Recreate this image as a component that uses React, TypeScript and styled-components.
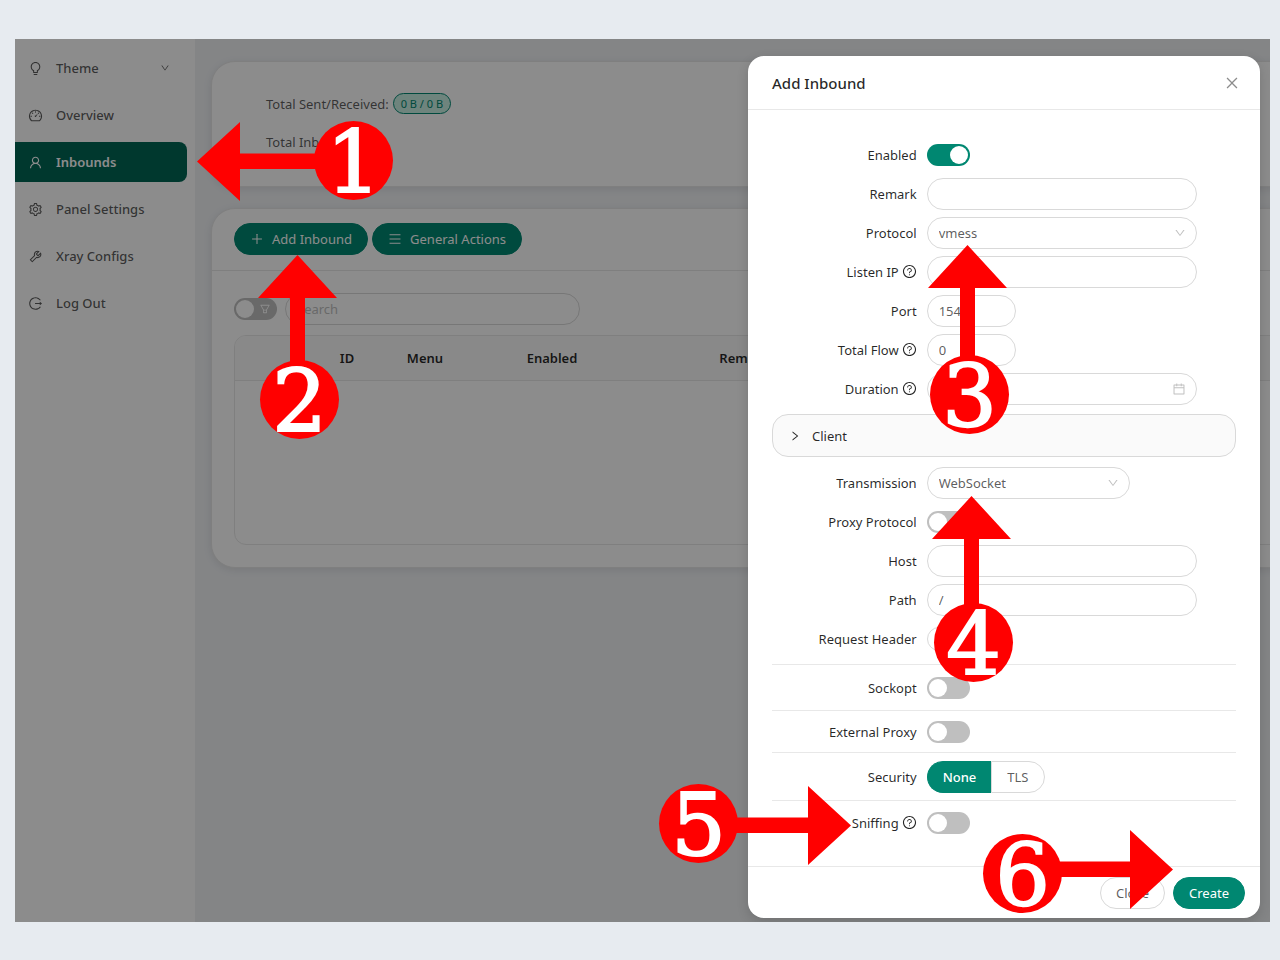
import React from "react";
import styled, { createGlobalStyle, css } from "styled-components";
import {
  AiOutlineBulb,
  AiOutlineCalendar,
  AiOutlineClose,
  AiOutlineDashboard,
  AiOutlineDown,
  AiOutlineFilter,
  AiOutlineLogout,
  AiOutlineMenu,
  AiOutlinePlus,
  AiOutlineQuestionCircle,
  AiOutlineRight,
  AiOutlineSetting,
  AiOutlineTool,
  AiOutlineUser,
} from "react-icons/ai";

const primary = "#008771";
const line = "#e8e8e8";
const border = "#d9d9d9";
const ink = "rgba(0, 0, 0, 0.85)";
const soft = "rgba(0, 0, 0, 0.65)";

const GlobalStyle = createGlobalStyle`
  * { box-sizing: border-box; }
  body {
    margin: 0;
    background: #e7ebf0;
    color: ${soft};
    font: 13px/20px "Noto Sans", "Open Sans", sans-serif;
  }
  button, input, select { font: inherit; color: inherit; }
  svg { display: block; flex: none; }
`;

const Page = styled.div`
  min-height: 100vh;
  padding: 39px 10px 38px 15px;
`;

/* The application and its dialog layer share one grid cell. */
const Frame = styled.div`
  position: relative;
  display: grid;
  grid-template: "stack" auto / minmax(0, 1fr);
  overflow: hidden;
`;

const Shell = styled.div`
  grid-area: stack;
  display: flex;
  min-width: 0;
  background: #f0f2f5;
`;

const Sidebar = styled.nav`
  flex: none;
  width: 180px;
  padding: 9px 8px 10px 0;
  background: #fff;
  display: flex;
  flex-direction: column;
  gap: 7px;
`;

const NavItem = styled.a<{ $active?: boolean }>`
  display: flex;
  align-items: center;
  gap: 13px;
  height: 40px;
  padding: 0 17px 0 13px;
  border-radius: 0 8px 8px 0;
  color: ${soft};
  font-weight: 500;
  text-decoration: none;
  ${(p) =>
    p.$active &&
    css`
      background: #006655;
      color: #fff;
      font-weight: 600;
    `}
`;

const NavText = styled.span`
  flex: 1;
`;

const Main = styled.main`
  flex: 1;
  min-width: 0;
  padding: 22px 0 22px 16px;
  display: flex;
  flex-direction: column;
  gap: 21px;
`;

const Card = styled.section`
  margin-right: -48px;
  border: 1px solid ${line};
  border-radius: 24px;
  background: #fff;
  box-shadow: 0 2px 8px rgba(0, 0, 0, 0.09);
`;

const Totals = styled(Card)`
  display: flex;
  flex-direction: column;
  gap: 17px;
  padding: 31px 54px 34px;
`;

const Total = styled.div`
  display: flex;
  align-items: center;
  gap: 4px;
  height: 21px;
`;

const Tag = styled.span`
  padding: 0 7px;
  border: 1px solid ${primary};
  border-radius: 11px;
  background: #c9f0e4;
  color: ${primary};
  font-size: 11px;
  line-height: 19px;
`;

const Toolbar = styled.div`
  display: flex;
  gap: 4px;
  padding: 14px 22px 15px;
  border-bottom: 1px solid ${line};
`;

const Button = styled.button<{ $primary?: boolean }>`
  display: inline-flex;
  align-items: center;
  justify-content: center;
  gap: 8px;
  height: 32px;
  padding: 0 15px;
  border: 1px solid ${(p) => (p.$primary ? primary : border)};
  border-radius: 16px;
  background: ${(p) => (p.$primary ? primary : "#fff")};
  color: ${(p) => (p.$primary ? "#fff" : soft)};
`;

const CardBody = styled.div`
  padding: 22px;
`;

const Filters = styled.div`
  display: flex;
  align-items: center;
  gap: 8px;
  margin-bottom: 10px;
`;

const SwitchBox = styled.span`
  position: relative;
  display: inline-flex;
  align-items: center;
  width: 43px;
  height: 22px;
  flex: none;
`;

const SwitchInput = styled.input`
  appearance: none;
  width: 100%;
  height: 100%;
  margin: 0;
  padding: 2px;
  display: flex;
  border-radius: 11px;
  background: #bfbfbf;
  &::before {
    content: "";
    width: 18px;
    height: 18px;
    border-radius: 50%;
    background: #fff;
  }
  &:checked {
    justify-content: flex-end;
    background: ${primary};
  }
`;

const SwitchIcon = styled.span`
  position: absolute;
  right: 6px;
  color: #fff;
  pointer-events: none;
`;

const Input = styled.input<{ $width?: string }>`
  width: ${(p) => p.$width ?? "100%"};
  height: 32px;
  padding: 0 11px;
  border: 1px solid ${border};
  border-radius: 16px;
  background: #fff;
  outline: none;
  &::placeholder { color: #bfbfbf; }
`;

const TableBox = styled.div`
  height: 210px;
  border: 1px solid ${line};
  border-radius: 12px;
  overflow: hidden;
`;

const Table = styled.table`
  width: 100%;
  border-collapse: collapse;
  table-layout: fixed;
`;

const Th = styled.th<{ $width?: number }>`
  width: ${(p) => (p.$width ? `${p.$width}px` : "auto")};
  height: 44px;
  padding: 0;
  border-bottom: 1px solid ${line};
  background: #fafafa;
  color: ${ink};
  font-weight: 600;
  text-align: center;
`;

const Overlay = styled.div`
  grid-area: stack;
  position: relative;
  display: flex;
  justify-content: flex-end;
  align-items: flex-start;
  padding: 17px 10px 4px;
  background: rgba(0, 0, 0, 0.45);
`;

const Dialog = styled.div`
  position: relative;
  width: 512px;
  max-width: 100%;
  border-radius: 16px;
  background: #fff;
  box-shadow: 0 4px 12px rgba(0, 0, 0, 0.15);
`;

const DialogHeader = styled.header`
  display: flex;
  align-items: center;
  justify-content: space-between;
  height: 54px;
  padding: 0 20px 0 24px;
  border-bottom: 1px solid ${line};
`;

const DialogTitle = styled.h2`
  margin: 0;
  color: ${ink};
  font-size: 15px;
  font-weight: 500;
`;

const IconButton = styled.button`
  padding: 0;
  border: 0;
  background: none;
  color: rgba(0, 0, 0, 0.45);
`;

const DialogBody = styled.form`
  padding: 25px 24px 22px;
`;

const DialogFooter = styled.footer`
  display: flex;
  justify-content: flex-end;
  gap: 8px;
  padding: 10px 15px 9px;
  border-top: 1px solid ${line};
`;

const Row = styled.div`
  display: grid;
  grid-template-columns: 8fr 14fr 2fr;
  align-items: center;
  height: 39px;
`;

const Label = styled.label`
  display: flex;
  align-items: center;
  justify-content: flex-end;
  gap: 3px;
  padding-right: 10px;
  color: ${ink};
  white-space: nowrap;
`;

const Control = styled.div`
  position: relative;
  display: flex;
  align-items: center;
`;

const SelectBox = styled.div<{ $width?: string }>`
  position: relative;
  display: flex;
  align-items: center;
  width: ${(p) => p.$width ?? "100%"};
`;

const Select = styled.select`
  appearance: none;
  width: 100%;
  height: 32px;
  padding: 0 30px 0 11px;
  border: 1px solid ${border};
  border-radius: 16px;
  background: #fff;
  outline: none;
`;

const FieldIcon = styled.span`
  position: absolute;
  right: 11px;
  color: rgba(0, 0, 0, 0.25);
  pointer-events: none;
`;

const Collapse = styled.button`
  display: flex;
  align-items: center;
  gap: 11px;
  width: 100%;
  height: 43px;
  margin: 6px 0;
  padding: 0 16px;
  border: 1px solid ${border};
  border-radius: 16px;
  background: #fafafa;
  color: ${ink};
`;

const SmallButton = styled(Button)`
  width: 43px;
  height: 24px;
  padding: 0;
`;

const Section = styled.div<{ $pad: number }>`
  padding: ${(p) => p.$pad}px 0;
  border-top: 1px solid ${line};
`;

const FirstSection = styled(Section)`
  margin-top: 6px;
`;

const RadioGroup = styled.div`
  display: flex;
`;

const RadioLabel = styled.label`
  display: flex;
  align-items: center;
  height: 32px;
  padding: 0 15px;
  border: 1px solid ${border};
  &:first-child { border-radius: 16px 0 0 16px; border-right: 0; }
  &:last-child { border-radius: 0 16px 16px 0; }
  &:has(input:checked) {
    border-color: ${primary};
    background: ${primary};
    color: #fff;
    font-weight: 500;
  }
`;

const RadioInput = styled.input`
  appearance: none;
  width: 0;
  height: 0;
  margin: 0;
`;

/* Numbered tutorial callouts lie over the interface. */
const Callout = styled.div<{ $x: number; $y: number }>`
  position: absolute;
  left: ${(p) => p.$x}px;
  top: ${(p) => p.$y}px;
  width: 79px;
  height: 79px;
  border-radius: 50%;
  background: #f00;
  color: #fff;
  font: 86px/83px "DejaVu Serif", serif;
  text-align: center;
  -webkit-text-stroke: 2px #fff;
  pointer-events: none;
`;

const ArrowSvg = styled.svg<{ $x: number; $y: number }>`
  position: absolute;
  left: ${(p) => p.$x}px;
  top: ${(p) => p.$y}px;
  fill: #f00;
  pointer-events: none;
`;

type ArrowProps = { x: number; y: number; dir: "up" | "left" | "right" };

const arrowShapes = {
  up: { w: 79, h: 120, d: "M39.500 0L79 43H47V120H32V43H0Z" },
  left: { w: 130, h: 79, d: "M0 39.500L43 0V31.500H130V47H43V79Z" },
  right: { w: 130, h: 79, d: "M130 39.500L87 0V31.500H0V47H87V79Z" },
};

function Arrow({ x, y, dir }: ArrowProps) {
  const s = arrowShapes[dir];
  return (
    <ArrowSvg $x={x} $y={y} width={s.w} height={s.h} aria-hidden="true">
      <path d={s.d} />
    </ArrowSvg>
  );
}

function Switch({ id, checked, label, icon }: { id?: string; checked?: boolean; label?: string; icon?: React.ReactNode }) {
  return (
    <SwitchBox>
      <SwitchInput id={id} type="checkbox" role="switch" defaultChecked={checked} aria-label={label} />
      {icon && <SwitchIcon>{icon}</SwitchIcon>}
    </SwitchBox>
  );
}

function Field({ id, label, help, children }: { id: string; label: string; help?: boolean; children: React.ReactNode }) {
  return (
    <Row>
      <Label htmlFor={id}>
        {label}
        {help && <AiOutlineQuestionCircle size={15} />}
      </Label>
      <Control>{children}</Control>
    </Row>
  );
}

const navItems = [
  { text: "Theme", icon: AiOutlineBulb, arrow: true },
  { text: "Overview", icon: AiOutlineDashboard },
  { text: "Inbounds", icon: AiOutlineUser, active: true },
  { text: "Panel Settings", icon: AiOutlineSetting },
  { text: "Xray Configs", icon: AiOutlineTool },
  { text: "Log Out", icon: AiOutlineLogout },
];

export default function App() {
  return (
    <Page>
      <GlobalStyle />
      <Frame>
        <Shell>
          <Sidebar>
            {navItems.map(({ text, icon: Icon, arrow, active }) => (
              <NavItem key={text} href="#" $active={active}>
                <Icon size={15} />
                <NavText>{text}</NavText>
                {arrow && <AiOutlineDown size={10} />}
              </NavItem>
            ))}
          </Sidebar>
          <Main>
            <Totals>
              <Total>
                Total Sent/Received: <Tag>0 B / 0 B</Tag>
              </Total>
              <Total>Total Inbounds:</Total>
            </Totals>
            <Card>
              <Toolbar>
                <Button $primary type="button">
                  <AiOutlinePlus size={14} />
                  Add Inbound
                </Button>
                <Button $primary type="button">
                  <AiOutlineMenu size={14} />
                  General Actions
                </Button>
              </Toolbar>
              <CardBody>
                <Filters>
                  <Switch label="Filter" icon={<AiOutlineFilter size={12} />} />
                  <Input $width="295px" placeholder="Search" aria-label="Search" />
                </Filters>
                <TableBox>
                  <Table>
                    <thead>
                      <tr>
                        <Th $width={82} aria-label="Expand" />
                        <Th $width={60}>ID</Th>
                        <Th $width={96}>Menu</Th>
                        <Th $width={158}>Enabled</Th>
                        <Th $width={226}>Remark</Th>
                        <Th aria-label="Details" />
                      </tr>
                    </thead>
                  </Table>
                </TableBox>
              </CardBody>
            </Card>
          </Main>
        </Shell>

        <Overlay>
          <Dialog role="dialog" aria-label="Add Inbound">
            <DialogHeader>
              <DialogTitle>Add Inbound</DialogTitle>
              <IconButton type="button" aria-label="Dismiss">
                <AiOutlineClose size={16} />
              </IconButton>
            </DialogHeader>
            <DialogBody>
              <Field id="enabled" label="Enabled">
                <Switch id="enabled" checked />
              </Field>
              <Field id="remark" label="Remark">
                <Input id="remark" />
              </Field>
              <Field id="protocol" label="Protocol">
                <SelectBox>
                  <Select id="protocol">
                    <option>vmess</option>
                  </Select>
                  <FieldIcon><AiOutlineDown size={12} /></FieldIcon>
                </SelectBox>
              </Field>
              <Field id="listen" label="Listen IP" help>
                <Input id="listen" />
              </Field>
              <Field id="port" label="Port">
                <Input id="port" $width="89px" defaultValue="154" />
              </Field>
              <Field id="flow" label="Total Flow" help>
                <Input id="flow" $width="89px" defaultValue="0" />
              </Field>
              <Field id="duration" label="Duration" help>
                <Input id="duration" />
                <FieldIcon><AiOutlineCalendar size={14} /></FieldIcon>
              </Field>

              <Collapse type="button">
                <AiOutlineRight size={12} />
                Client
              </Collapse>

              <Field id="transmission" label="Transmission">
                <SelectBox $width="203px">
                  <Select id="transmission">
                    <option>WebSocket</option>
                  </Select>
                  <FieldIcon><AiOutlineDown size={12} /></FieldIcon>
                </SelectBox>
              </Field>
              <Field id="proxy" label="Proxy Protocol">
                <Switch id="proxy" />
              </Field>
              <Field id="host" label="Host">
                <Input id="host" />
              </Field>
              <Field id="path" label="Path">
                <Input id="path" defaultValue="/" />
              </Field>
              <Field id="headers" label="Request Header">
                <SmallButton id="headers" type="button">
                  <AiOutlinePlus size={12} />
                </SmallButton>
              </Field>
              <FirstSection $pad={3}>
                <Field id="sockopt" label="Sockopt">
                  <Switch id="sockopt" />
                </Field>
              </FirstSection>
              <Section $pad={1}>
                <Field id="external" label="External Proxy">
                  <Switch id="external" />
                </Field>
              </Section>
              <Section $pad={4}>
                <Field id="security-none" label="Security">
                  <RadioGroup>
                    <RadioLabel>
                      <RadioInput id="security-none" type="radio" name="security" defaultChecked />
                      None
                    </RadioLabel>
                    <RadioLabel>
                      <RadioInput type="radio" name="security" />
                      TLS
                    </RadioLabel>
                  </RadioGroup>
                </Field>
              </Section>
              <Section $pad={2}>
                <Field id="sniffing" label="Sniffing" help>
                  <Switch id="sniffing" />
                </Field>
              </Section>
            </DialogBody>
            <DialogFooter>
              <Button type="button">Close</Button>
              <Button type="button" $primary>Create</Button>
            </DialogFooter>

            <Arrow x={180} y={189} dir="up" />
            <Callout $x={182} $y={299}>3</Callout>
            <Arrow x={184} y={440} dir="up" />
            <Callout $x={186} $y={547}>4</Callout>
            <Arrow x={-27} y={730} dir="right" />
            <Callout $x={-89} $y={728}>5</Callout>
            <Arrow x={295} y={774} dir="right" />
            <Callout $x={235} $y={778}>6</Callout>
          </Dialog>
          <Arrow x={182} y={83} dir="left" />
          <Callout $x={299} $y={82}>1</Callout>
          <Arrow x={243} y={216} dir="up" />
          <Callout $x={245} $y={321}>2</Callout>
        </Overlay>
      </Frame>
    </Page>
  );
}
